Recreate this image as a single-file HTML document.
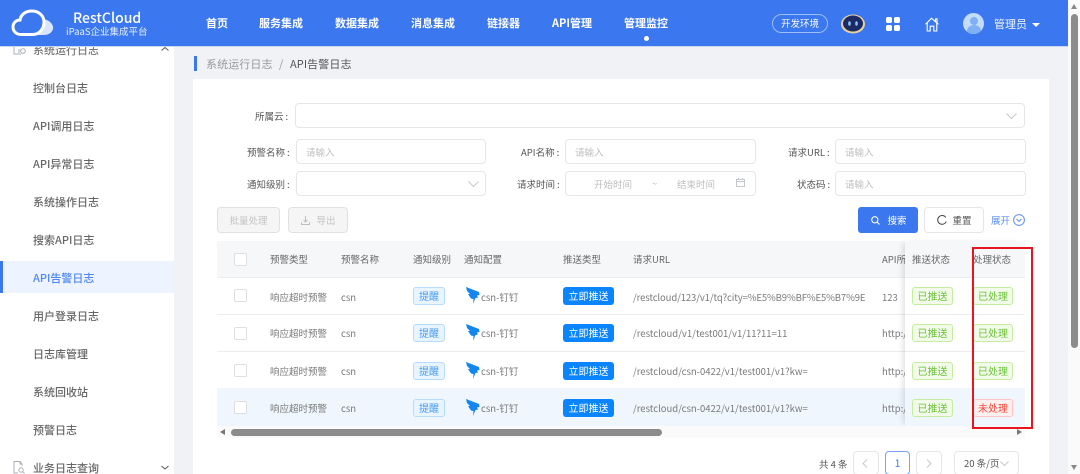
<!DOCTYPE html>
<html lang="zh-CN">
<head>
<meta charset="utf-8">
<title>API告警日志</title>
<style>
html,body{margin:0;padding:0;width:1080px;height:474px;overflow:hidden;background:#f0f2f6;}
body{position:relative;font-family:"Noto Sans CJK SC","Liberation Sans",sans-serif;font-size:11px;color:#666;}
.a{position:absolute;white-space:nowrap;line-height:16px;}
.box{position:absolute;box-sizing:border-box;background:#fff;border:1px solid #e4e6e9;border-radius:4px;}
.lab{position:absolute;white-space:nowrap;line-height:16px;color:#555;font-size:9.5px;}
.lab i{font-style:normal;margin-left:2px;}
.ph{position:absolute;white-space:nowrap;line-height:16px;color:#bdbdbd;font-size:9.5px;}
.nav{position:absolute;top:15px;line-height:17px;color:#fff;font-size:11px;font-weight:700;white-space:nowrap;}
.side{position:absolute;left:33px;line-height:18px;color:#666;font-size:11px;font-weight:500;white-space:nowrap;}
.th{position:absolute;top:251px;line-height:16px;color:#666;font-size:9.5px;white-space:nowrap;}
.td{position:absolute;line-height:16px;color:#7a7a7a;font-size:9.5px;white-space:nowrap;}
.cb{position:absolute;left:234px;width:13px;height:13px;box-sizing:border-box;background:#fff;border:1px solid #dfdfdf;border-radius:2px;}
.tip{position:absolute;left:413px;width:32px;height:18px;box-sizing:border-box;background:#e8f4ff;border:1px solid #b5dcff;border-radius:3px;color:#4a9cf5;font-size:10px;line-height:16px;text-align:center;}
.push{position:absolute;left:563px;width:51px;height:18px;background:#0a84ff;border-radius:3px;color:#fff;font-size:10px;line-height:18px;text-align:center;}
.gr{position:absolute;width:41px;height:18px;box-sizing:border-box;background:#f2fbe9;border:1px solid #c5eda0;border-radius:3px;color:#6cc23a;font-size:10px;line-height:16px;text-align:center;}
.rd{position:absolute;width:40px;height:18px;box-sizing:border-box;background:#fff0f0;border:1px solid #ffc4c4;border-radius:3px;color:#f5483b;font-size:10px;line-height:16px;text-align:center;}
.ln{position:absolute;left:217px;width:808px;height:1px;background:#ebedf0;}
svg{position:absolute;display:block;overflow:visible;}
</style>
</head>
<body>

<!-- Header -->
<div class="a" style="left:0;top:0;width:1068px;height:46px;background:#3b78f0;border-bottom:1px solid #c9d6ef;box-sizing:content-box;"></div>
<svg style="left:11px;top:9px;" width="44" height="28" viewBox="0 0 44 28">
  <path d="M32 10C39 11 43 16 42 20C41 24 37 26 33 26H25C31 24 34 17 32 10Z" fill="#d8e5fb"/>
  <path d="M10 25.5C5 25.5 2 22 2 18C2 14 5 11 9 11C10 5 15 2 21 2C28 2 33 7 33 13C33 20 28 25.5 22 25.5Z" fill="none" stroke="#fff" stroke-width="3"/>
</svg>
<div class="a" style="left:73px;top:9px;color:#fff;font-size:14px;line-height:18px;font-weight:500;">RestCloud</div>
<div class="a" style="left:66px;top:24px;color:#e8f0ff;font-size:9.5px;line-height:14px;">iPaaS企业集成平台</div>

<div class="nav" style="left:206px;">首页</div>
<div class="nav" style="left:259px;">服务集成</div>
<div class="nav" style="left:335px;">数据集成</div>
<div class="nav" style="left:411px;">消息集成</div>
<div class="nav" style="left:487px;">链接器</div>
<div class="nav" style="left:552px;">API管理</div>
<div class="nav" style="left:624px;">管理监控</div>
<div class="a" style="left:644px;top:36px;width:5px;height:5px;border-radius:50%;background:#fff;"></div>

<div class="a" style="left:772px;top:14px;width:56px;height:19px;box-sizing:border-box;border:1px solid #9fbdf7;border-radius:10px;color:#fff;font-size:9.5px;line-height:17px;text-align:center;">开发环境</div>
<svg style="left:841px;top:13px;" width="24" height="21" viewBox="0 0 24 21">
  <ellipse cx="12" cy="11" rx="12" ry="9.5" fill="#e9cf9c"/>
  <ellipse cx="12" cy="10.5" rx="10" ry="8" fill="#1b2a63"/>
  <ellipse cx="8.5" cy="10.5" rx="1.3" ry="2.3" fill="#8ec5ff"/>
  <ellipse cx="15.5" cy="10.5" rx="1.3" ry="2.3" fill="#8ec5ff"/>
</svg>
<svg style="left:886px;top:17px;" width="14" height="14" viewBox="0 0 14 14" fill="#fff">
  <rect x="0" y="0" width="6" height="6" rx="1.8"/><rect x="8" y="0" width="6" height="6" rx="1.8"/>
  <rect x="0" y="8" width="6" height="6" rx="1.8"/><rect x="8" y="8" width="6" height="6" rx="1.8"/>
</svg>
<svg style="left:925px;top:17px;" width="14" height="15" viewBox="0 0 14 15" fill="none" stroke="#fff" stroke-width="1.1">
  <path d="M.6 7.3L6.5 1.2L13.4 7.3M10.5 4.5V1.8H12V6M2.2 6V14H5.2V9.2H8.8V14H11.8V6"/>
</svg>
<div class="a" style="left:963px;top:13px;width:21px;height:21px;border-radius:50%;background:#c4dcfb;overflow:hidden;">
  <div style="position:absolute;left:7px;top:4px;width:8px;height:8px;border-radius:50%;background:#7fb0f5;"></div>
  <div style="position:absolute;left:4px;top:12px;width:14px;height:12px;border-radius:50%;background:#7fb0f5;"></div>
</div>
<div class="a" style="left:994px;top:16px;color:#f0f5ff;font-size:11px;">管理员</div>
<div class="a" style="left:1032px;top:23px;width:0;height:0;border-left:4px solid transparent;border-right:4px solid transparent;border-top:4px solid #fff;"></div>

<!-- Sidebar -->
<div class="a" style="left:0;top:47px;width:174px;height:427px;background:#fff;overflow:hidden;"></div>
<div class="a" style="left:33px;top:41px;width:80px;height:15px;overflow:hidden;line-height:18px;color:#777;font-size:11px;font-weight:500;clip-path:inset(6px 0 0 0);">系统运行日志</div>
<svg style="left:13px;top:47px;" width="13" height="8" viewBox="0 0 13 8" fill="none" stroke="#aab0b8" stroke-width="1">
  <path d="M1 0V7H8M5 3H8M5 5H7"/><circle cx="10" cy="4" r="2.3"/>
</svg>
<svg style="left:161px;top:47px;" width="8" height="5" viewBox="0 0 8 5" fill="none" stroke="#555" stroke-width="1"><path d="M.5 3.5L4 .5L7.5 3.5"/></svg>

<div class="side" style="top:79px;">控制台日志</div>
<div class="side" style="top:117px;">API调用日志</div>
<div class="side" style="top:155px;">API异常日志</div>
<div class="side" style="top:193px;">系统操作日志</div>
<div class="side" style="top:231px;">搜索API日志</div>
<div class="a" style="left:0;top:261px;width:174px;height:32px;background:#edf3ff;"></div>
<div class="a" style="left:0;top:261px;width:3px;height:32px;background:#3b78f0;"></div>
<div class="side" style="top:269px;color:#4f86f2;">API告警日志</div>
<div class="side" style="top:307px;">用户登录日志</div>
<div class="side" style="top:345px;">日志库管理</div>
<div class="side" style="top:383px;">系统回收站</div>
<div class="side" style="top:421px;">预警日志</div>
<svg style="left:13px;top:461px;" width="12" height="13" viewBox="0 0 12 13" fill="none" stroke="#aab0b8" stroke-width="1">
  <path d="M9 5V3L7 .5H1V12H5M7 .5V3H9"/><circle cx="8" cy="9" r="2.2"/><path d="M10 11L11.5 12.5"/>
</svg>
<div class="side" style="top:459px;">业务日志查询</div>
<svg style="left:161px;top:465px;" width="8" height="5" viewBox="0 0 8 5" fill="none" stroke="#555" stroke-width="1"><path d="M.5 1L4 4L7.5 1"/></svg>

<!-- Breadcrumb -->
<div class="a" style="left:194px;top:56px;width:3px;height:15px;background:#3b78f0;"></div>
<div class="a" style="left:206px;top:56px;color:#999;font-size:11px;letter-spacing:.1px;">系统运行日志</div>
<div class="a" style="left:279px;top:56px;color:#999;font-size:11px;">/</div>
<div class="a" style="left:290px;top:56px;color:#555;font-size:11px;letter-spacing:.1px;">API告警日志</div>

<!-- Card -->
<div class="a" style="left:193px;top:79px;width:856px;height:395px;background:#fff;"></div>

<!-- Form -->
<div class="lab" style="left:255px;top:108px;">所属云<i>:</i></div>
<div class="box" style="left:295px;top:103px;width:730px;height:25px;"></div>
<svg style="left:1006px;top:113px;" width="11" height="6" viewBox="0 0 11 6" fill="none" stroke="#c4c8cc" stroke-width="1"><path d="M.5 .5L5.5 5.5L10.5 .5"/></svg>

<div class="lab" style="left:247px;top:144px;">预警名称<i>:</i></div>
<div class="box" style="left:296px;top:139px;width:190px;height:25px;"></div>
<div class="ph" style="left:306px;top:144px;">请输入</div>
<div class="lab" style="left:521px;top:144px;">API名称<i>:</i></div>
<div class="box" style="left:565px;top:139px;width:191px;height:25px;"></div>
<div class="ph" style="left:575px;top:144px;">请输入</div>
<div class="lab" style="left:788px;top:144px;">请求URL<i>:</i></div>
<div class="box" style="left:835px;top:139px;width:191px;height:25px;"></div>
<div class="ph" style="left:845px;top:144px;">请输入</div>

<div class="lab" style="left:247px;top:176px;">通知级别<i>:</i></div>
<div class="box" style="left:296px;top:171px;width:190px;height:25px;"></div>
<svg style="left:468px;top:181px;" width="11" height="6" viewBox="0 0 11 6" fill="none" stroke="#c4c8cc" stroke-width="1"><path d="M.5 .5L5.5 5.5L10.5 .5"/></svg>
<div class="lab" style="left:517px;top:176px;">请求时间<i>:</i></div>
<div class="box" style="left:565px;top:171px;width:191px;height:25px;"></div>
<div class="ph" style="left:594px;top:176px;">开始时间</div>
<div class="ph" style="left:652px;top:175px;">~</div>
<div class="ph" style="left:677px;top:176px;">结束时间</div>
<svg style="left:736px;top:178px;" width="9" height="9" viewBox="0 0 9 9" fill="none" stroke="#c4c8cc" stroke-width="1"><path d="M.5 1.5H8.5V8.5H.5ZM.5 3.5H8.5M2.5 0V2M6.5 0V2"/></svg>
<div class="lab" style="left:797px;top:176px;">状态码<i>:</i></div>
<div class="box" style="left:835px;top:171px;width:191px;height:25px;"></div>
<div class="ph" style="left:845px;top:176px;">请输入</div>

<!-- Action buttons -->
<div class="box" style="left:217px;top:207px;width:63px;height:26px;background:#f5f5f5;border-color:#e1e1e1;color:#c3c3c3;font-size:9.5px;line-height:24px;text-align:center;">批量处理</div>
<div class="box" style="left:288px;top:207px;width:60px;height:26px;background:#f5f5f5;border-color:#e1e1e1;color:#c3c3c3;font-size:9.5px;line-height:24px;padding-left:16px;text-align:center;">导出</div>
<svg style="left:301px;top:216px;" width="9" height="9" viewBox="0 0 9 9" fill="none" stroke="#bfbfbf" stroke-width="1"><path d="M4.5 0V6M2.5 4L4.5 6L6.5 4M.5 6V8.5H8.5V6"/></svg>

<div class="a" style="left:858px;top:207px;width:60px;height:26px;background:#3b78f0;border-radius:3px;color:#fff;font-size:9.5px;line-height:26px;text-align:center;"><span style="padding-left:18px;">搜索</span></div>
<svg style="left:871px;top:216px;" width="9" height="9" viewBox="0 0 9 9" fill="none" stroke="#fff" stroke-width="1.1"><circle cx="3.8" cy="3.8" r="3.1"/><path d="M6.2 6.2L8.5 8.5"/></svg>
<div class="box" style="left:924px;top:207px;width:60px;height:26px;color:#555;font-size:9.5px;line-height:24px;text-align:center;"><span style="padding-left:16px;">重置</span></div>
<svg style="left:937px;top:215px;" width="10" height="10" viewBox="0 0 10 10" fill="none" stroke="#444" stroke-width="1"><path d="M8.8 2.5A4.4 4.4 0 1 0 9.2 6.5"/></svg>
<div class="a" style="left:991px;top:212px;color:#5b8ef4;font-size:9.5px;">展开</div>
<svg style="left:1013px;top:214px;" width="12" height="12" viewBox="0 0 12 12" fill="none" stroke="#5b8ef4" stroke-width="1"><circle cx="6" cy="6" r="5.4"/><path d="M3.5 5L6 7.5L8.5 5"/></svg>

<!-- Table -->
<div class="a" style="left:217px;top:241px;width:808px;height:36px;background:#f6f7f9;"></div>
<div class="ln" style="top:277px;"></div>
<div class="ln" style="top:314px;"></div>
<div class="ln" style="top:351px;"></div>
<div class="a" style="left:217px;top:388px;width:808px;height:38px;background:#eff6fe;"></div>

<div class="cb" style="top:253px;"></div>
<div class="th" style="left:270px;">预警类型</div>
<div class="th" style="left:341px;">预警名称</div>
<div class="th" style="left:413px;">通知级别</div>
<div class="th" style="left:464px;">通知配置</div>
<div class="th" style="left:563px;">推送类型</div>
<div class="th" style="left:633px;">请求URL</div>
<div class="th" style="left:882px;width:24px;overflow:hidden;">API所属</div>

<!-- Row 1 -->
<div class="cb" style="top:289px;"></div>
<div class="td" style="left:270px;top:289px;">响应超时预警</div>
<div class="td" style="left:341px;top:289px;">csn</div>
<div class="tip" style="top:287px;">提醒</div>
<svg style="left:466px;top:287px;" width="14" height="17" viewBox="0 0 14 17"><path d="M0 0L13 5L13.5 8L11 8.5L12 10.5L9.5 11L7 17L7.5 12L5 11.5L2 7L4 7L1 4Z" fill="#1486f0"/></svg>
<div class="td" style="left:481px;top:289px;">csn-钉钉</div>
<div class="push" style="top:287px;">立即推送</div>
<div class="td" style="left:633px;top:289px;letter-spacing:-.11px;">/restcloud/123/v1/tq?city=%E5%B9%BF%E5%B7%9E</div>
<div class="td" style="left:882px;top:289px;">123</div>

<!-- Row 2 -->
<div class="cb" style="top:327px;"></div>
<div class="td" style="left:270px;top:325px;">响应超时预警</div>
<div class="td" style="left:341px;top:325px;">csn</div>
<div class="tip" style="top:324px;">提醒</div>
<svg style="left:466px;top:324px;" width="14" height="17" viewBox="0 0 14 17"><path d="M0 0L13 5L13.5 8L11 8.5L12 10.5L9.5 11L7 17L7.5 12L5 11.5L2 7L4 7L1 4Z" fill="#1486f0"/></svg>
<div class="td" style="left:481px;top:325px;">csn-钉钉</div>
<div class="push" style="top:324px;">立即推送</div>
<div class="td" style="left:633px;top:325px;">/restcloud/v1/test001/v1/11?11=11</div>
<div class="td" style="left:882px;top:325px;width:23px;overflow:hidden;">http://</div>

<!-- Row 3 -->
<div class="cb" style="top:364px;"></div>
<div class="td" style="left:270px;top:363px;">响应超时预警</div>
<div class="td" style="left:341px;top:363px;">csn</div>
<div class="tip" style="top:362px;">提醒</div>
<svg style="left:466px;top:362px;" width="14" height="17" viewBox="0 0 14 17"><path d="M0 0L13 5L13.5 8L11 8.5L12 10.5L9.5 11L7 17L7.5 12L5 11.5L2 7L4 7L1 4Z" fill="#1486f0"/></svg>
<div class="td" style="left:481px;top:363px;">csn-钉钉</div>
<div class="push" style="top:362px;">立即推送</div>
<div class="td" style="left:633px;top:363px;">/restcloud/csn-0422/v1/test001/v1?kw=</div>
<div class="td" style="left:882px;top:363px;width:23px;overflow:hidden;">http://</div>

<!-- Row 4 -->
<div class="cb" style="top:401px;"></div>
<div class="td" style="left:270px;top:400px;">响应超时预警</div>
<div class="td" style="left:341px;top:400px;">csn</div>
<div class="tip" style="top:399px;">提醒</div>
<svg style="left:466px;top:399px;" width="14" height="17" viewBox="0 0 14 17"><path d="M0 0L13 5L13.5 8L11 8.5L12 10.5L9.5 11L7 17L7.5 12L5 11.5L2 7L4 7L1 4Z" fill="#1486f0"/></svg>
<div class="td" style="left:481px;top:400px;">csn-钉钉</div>
<div class="push" style="top:399px;">立即推送</div>
<div class="td" style="left:633px;top:400px;">/restcloud/csn-0422/v1/test001/v1?kw=</div>
<div class="td" style="left:882px;top:400px;width:23px;overflow:hidden;">http://</div>

<!-- Fixed right columns -->
<div class="a" style="left:905px;top:241px;width:120px;height:185px;background:transparent;box-shadow:-4px 0 6px -2px rgba(0,0,0,.12);"></div>
<div class="a" style="left:905px;top:241px;width:120px;height:36px;background:#f6f7f9;"></div>
<div class="a" style="left:905px;top:278px;width:120px;height:36px;background:#fff;"></div>
<div class="a" style="left:905px;top:315px;width:120px;height:36px;background:#fff;"></div>
<div class="a" style="left:905px;top:352px;width:120px;height:36px;background:#fff;"></div>
<div class="a" style="left:905px;top:388px;width:120px;height:38px;background:#eff6fe;"></div>
<div class="th" style="left:912px;">推送状态</div>
<div class="th" style="left:973px;">处理状态</div>
<div class="gr" style="left:912px;top:287px;">已推送</div>
<div class="gr" style="left:973px;top:287px;width:40px;">已处理</div>
<div class="gr" style="left:912px;top:324px;">已推送</div>
<div class="gr" style="left:973px;top:324px;width:40px;">已处理</div>
<div class="gr" style="left:912px;top:362px;">已推送</div>
<div class="gr" style="left:973px;top:362px;width:40px;">已处理</div>
<div class="gr" style="left:912px;top:399px;">已推送</div>
<div class="rd" style="left:973px;top:399px;">未处理</div>

<!-- Horizontal scrollbar -->
<div class="a" style="left:217px;top:426px;width:808px;height:12px;background:#fafafa;"></div>
<div class="a" style="left:220px;top:429px;width:0;height:0;border-top:3.5px solid transparent;border-bottom:3.5px solid transparent;border-right:5px solid #777;"></div>
<div class="a" style="left:231px;top:429px;width:431px;height:7px;background:#8c8c8c;border-radius:4px;"></div>
<div class="a" style="left:1017px;top:429px;width:0;height:0;border-top:3.5px solid transparent;border-bottom:3.5px solid transparent;border-left:5px solid #777;"></div>

<!-- Red annotation -->
<div class="a" style="left:972px;top:247px;width:61px;height:182px;box-sizing:border-box;border:2px solid #e8141f;"></div>

<!-- Pagination -->
<div class="a" style="left:819px;top:456px;color:#555;font-size:9.5px;">共 4 条</div>
<div class="box" style="left:853px;top:451px;width:26px;height:24px;"></div>
<svg style="left:862px;top:459px;" width="6" height="9" viewBox="0 0 6 9" fill="none" stroke="#c4c8cc" stroke-width="1"><path d="M5 .5L1 4.5L5 8.5"/></svg>
<div class="box" style="left:885px;top:451px;width:25px;height:24px;border-color:#7ba3f3;color:#3b78f0;font-size:10px;line-height:22px;text-align:center;">1</div>
<div class="box" style="left:916px;top:451px;width:26px;height:24px;"></div>
<svg style="left:926px;top:459px;" width="6" height="9" viewBox="0 0 6 9" fill="none" stroke="#c4c8cc" stroke-width="1"><path d="M1 .5L5 4.5L1 8.5"/></svg>
<div class="box" style="left:954px;top:451px;width:65px;height:24px;color:#555;font-size:9.5px;line-height:22px;padding-left:9px;">20 条/页</div>
<svg style="left:1000px;top:461px;" width="9" height="5" viewBox="0 0 9 5" fill="none" stroke="#c4c8cc" stroke-width="1"><path d="M.5 .5L4.5 4.5L8.5 .5"/></svg>

<!-- Page scrollbar -->
<div class="a" style="left:1068px;top:0;width:12px;height:474px;background:#fafafa;"></div>
<div class="a" style="left:1071px;top:4px;width:0;height:0;border-left:3.5px solid transparent;border-right:3.5px solid transparent;border-bottom:5px solid #888;"></div>
<div class="a" style="left:1071px;top:14px;width:7px;height:334px;background:#8c8c8c;border-radius:4px;"></div>
<div class="a" style="left:1071px;top:465px;width:0;height:0;border-left:3.5px solid transparent;border-right:3.5px solid transparent;border-top:5px solid #888;"></div>

</body>
</html>
